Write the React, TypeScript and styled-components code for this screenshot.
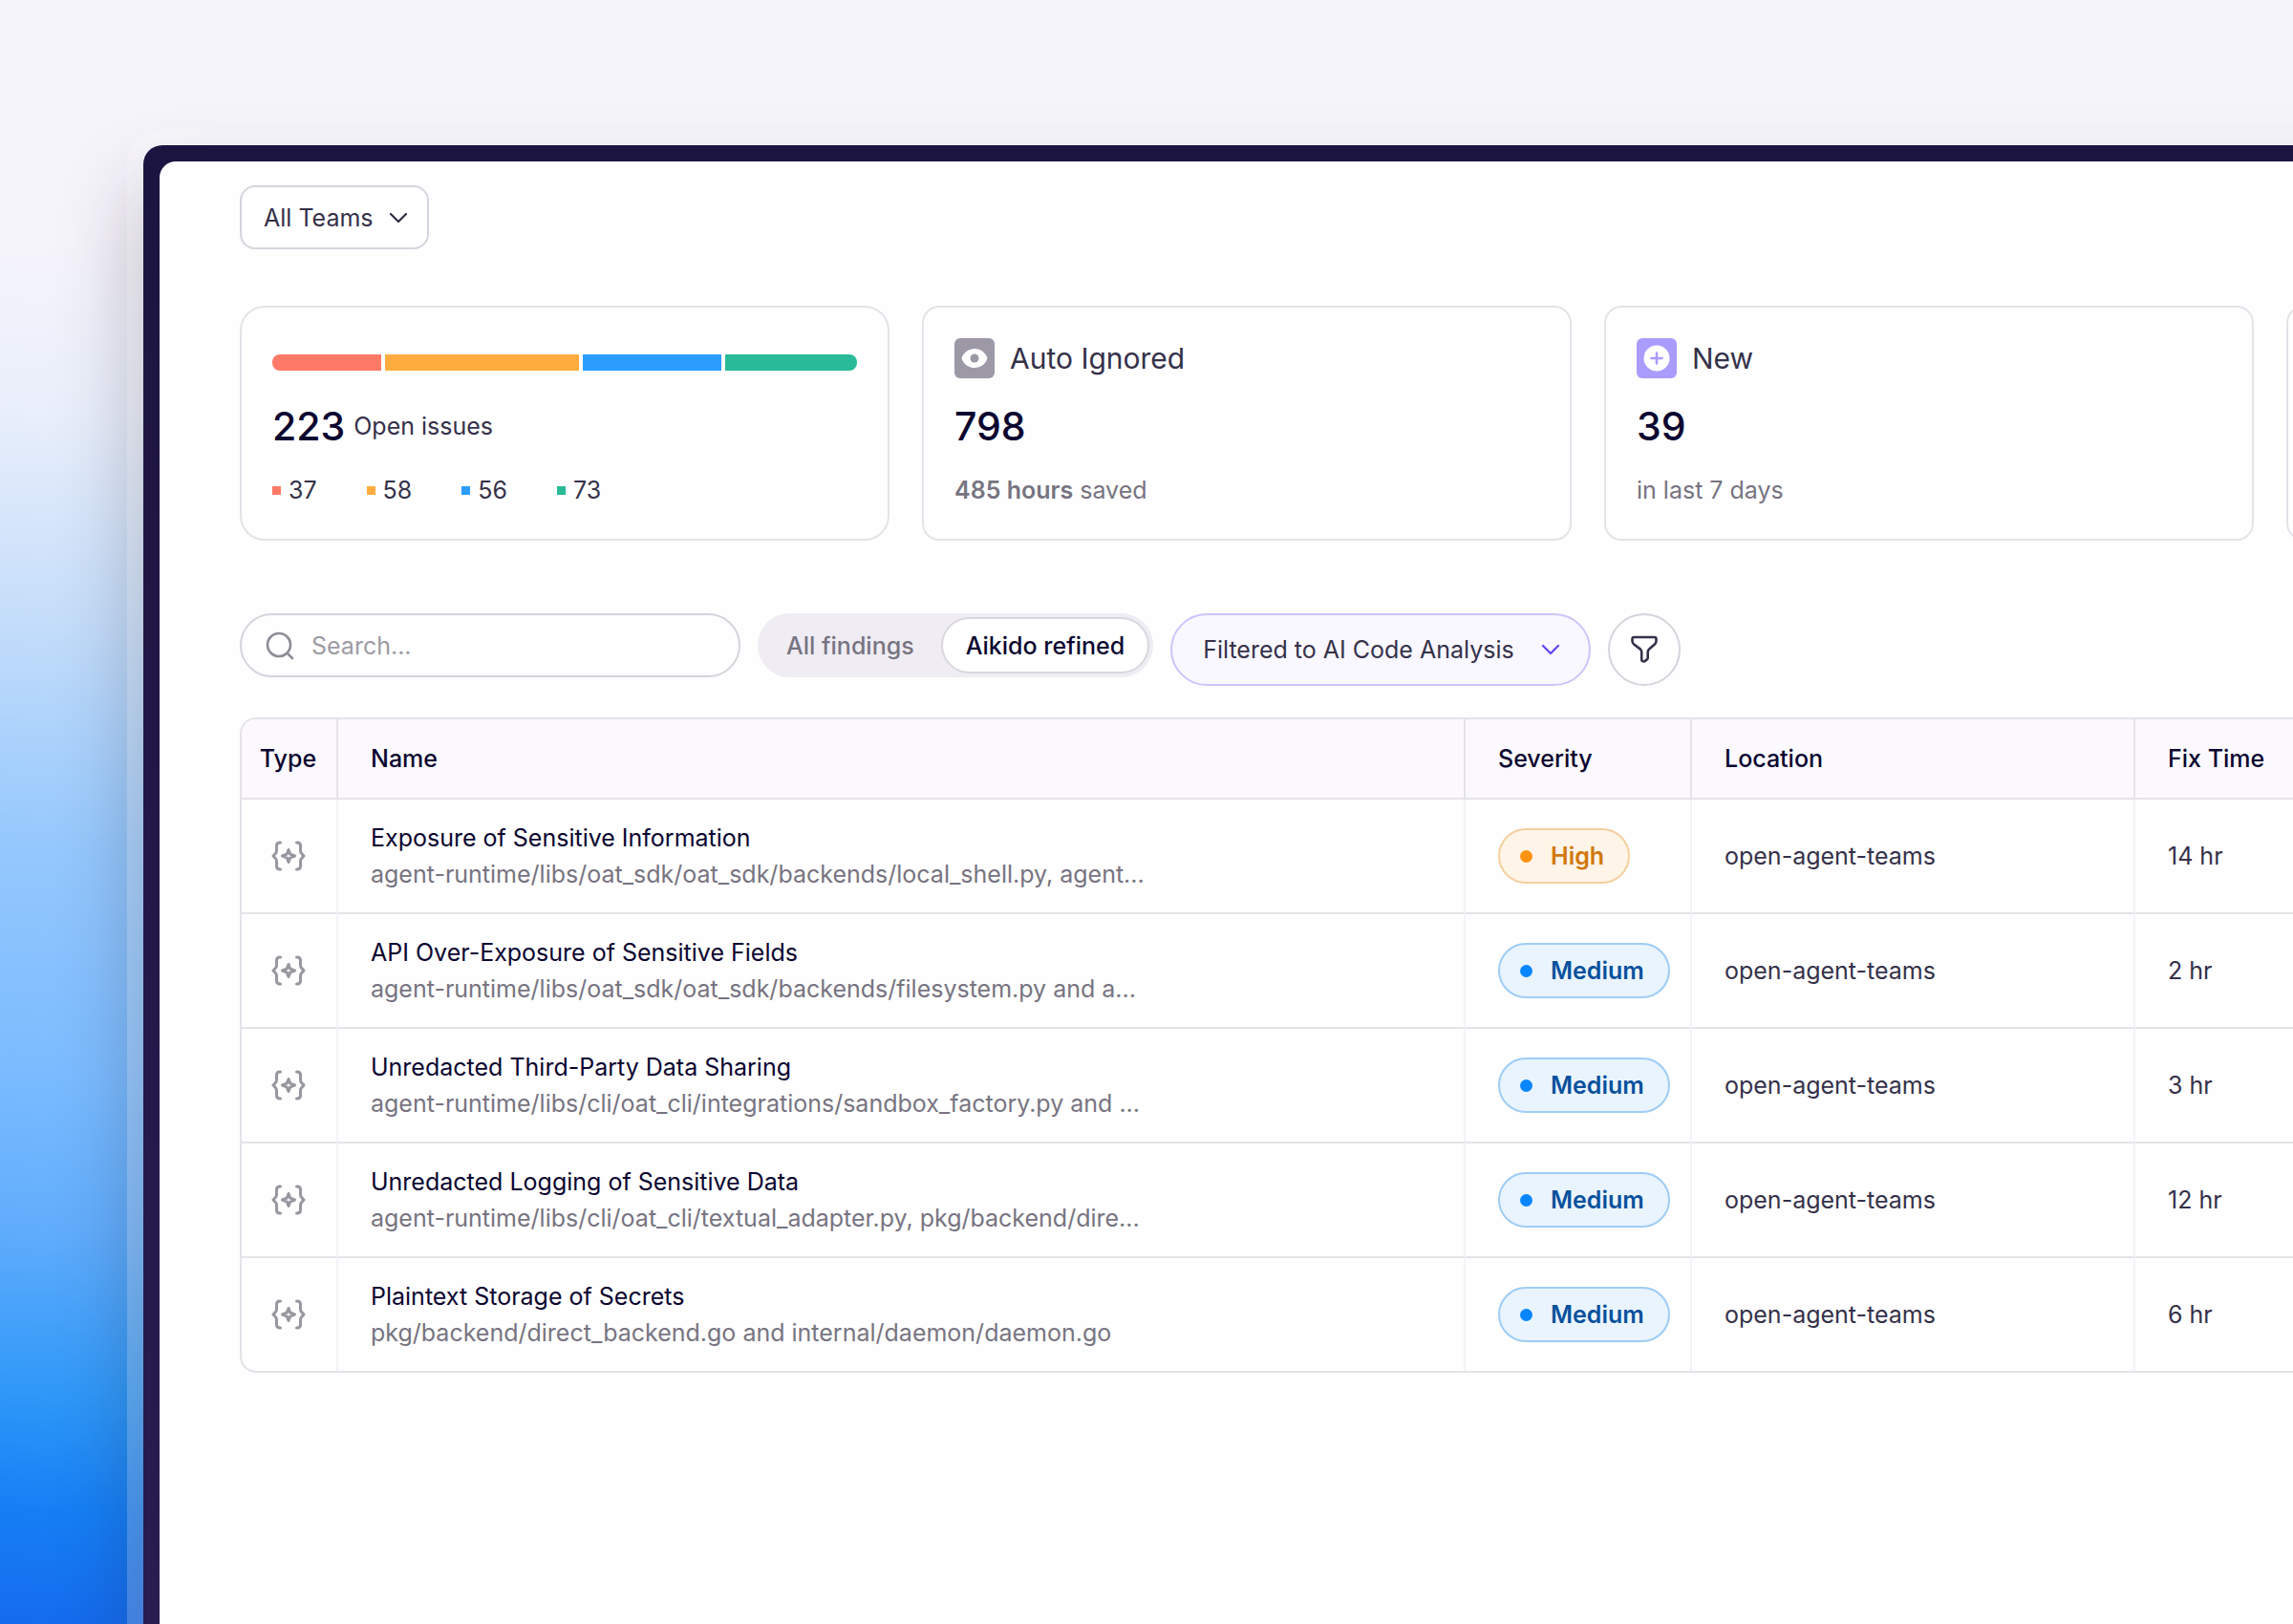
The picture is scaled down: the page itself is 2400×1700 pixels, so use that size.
import React from "react";
import styled, { createGlobalStyle } from "styled-components";

const GlobalStyle = createGlobalStyle`
  *, *::before, *::after { box-sizing: border-box; }
  body { margin: 0; }
  button, input, select { font: inherit; color: inherit; margin: 0; }
`;

const ink = "#0b0530";
const body = "#35314a";
const muted = "#777481";
const line = "#e5e3e9";

const Page = styled.div`
  display: flex;
  min-height: 100vh;
  padding: 152px 0 0 150px;
  overflow: hidden;
  font-family: Inter, "Liberation Sans", sans-serif;
  font-size: 25px;
  line-height: 38px;
  color: ${body};
  background: linear-gradient(
    184deg,
    #f6f4fb 0%,
    #f6f4fb 16%,
    #e9effb 27%,
    #c6defa 39%,
    #95c8fd 53%,
    #7abbff 67%,
    #61adfc 76%,
    #2f98f8 86%,
    #167ff5 93%,
    #156bee 100%
  );
  background-size: 600px 100%;
  background-repeat: no-repeat;
  background-color: #f6f4fb;
`;

const Frame = styled.div`
  flex: none;
  display: flex;
  width: 126vw;
  padding: 17px 17px 0;
  border-radius: 20px 20px 0 0;
  background: linear-gradient(#1c1440, #281c50);
  box-shadow:
    0 0 0 17px rgba(255, 255, 255, 0.2),
    0 50px 80px 10px rgba(20, 10, 30, 0.25);
`;

const Main = styled.main`
  flex: 1;
  min-width: 0;
  padding: 25px 84px 84px;
  border-radius: 17px 17px 0 0;
  background: #fefefe;
`;

const SelectBox = styled.label<{ $tinted?: boolean }>`
  position: relative;
  display: inline-flex;
  height: ${(p) => (p.$tinted ? 76 : 67)}px;
  border: 2px solid ${(p) => (p.$tinted ? "#cfc4fb" : "#d6d4dc")};
  border-radius: ${(p) => (p.$tinted ? 38 : 16)}px;
  background: ${(p) => (p.$tinted ? "#f9f7ff" : "#fff")};
  overflow: hidden;

  select {
    appearance: none;
    border: 0;
    outline: 0;
    background: transparent;
    padding: ${(p) => (p.$tinted ? "0 78px 0 32px" : "0 56px 0 23px")};
  }
  svg {
    position: absolute;
    right: ${(p) => (p.$tinted ? 30 : 20)}px;
    top: 50%;
    margin-top: -6px;
    pointer-events: none;
    color: ${(p) => (p.$tinted ? "#6149f5" : body)};
  }
`;

const Cards = styled.section`
  display: grid;
  grid-template-columns: repeat(4, minmax(0, 1fr));
  gap: 34px;
  margin-top: 59px;
`;

const Card = styled.article<{ $round?: boolean }>`
  display: flex;
  flex-direction: column;
  gap: 24px;
  min-height: 246px;
  padding: 32px 32px 34px;
  border: 2px solid ${line};
  border-radius: ${(p) => (p.$round ? 26 : 18)}px;
`;

const CardHead = styled.div`
  display: flex;
  align-items: center;
  gap: 16px;
  height: 42px;
`;

const CardTitle = styled.h2`
  margin: 0;
  font-size: 30px;
  font-weight: 400;
`;

const Tile = styled.span<{ $color: string }>`
  display: grid;
  place-items: center;
  width: 42px;
  height: 42px;
  border-radius: 6px;
  background: ${(p) => p.$color};
`;

const Bar = styled.div`
  display: flex;
  align-items: flex-end;
  gap: 4px;
  height: 42px;
  padding-bottom: 8px;
`;

const Segment = styled.span<{ $color: string; $share: number }>`
  flex: ${(p) => p.$share} 1 0;
  height: 17px;
  background: ${(p) => p.$color};
  &:first-child { border-radius: 8px 0 0 8px; }
  &:last-child { border-radius: 0 8px 8px 0; }
`;

const Figure = styled.div`
  display: flex;
  align-items: center;
  gap: 9px;
  height: 52px;
`;

const Big = styled.strong`
  font-size: 41px;
  font-weight: 500;
  color: ${ink};
`;

const Note = styled.p`
  margin: 0;
  line-height: 34px;
  color: ${muted};
  b { font-weight: 600; }
`;

const Legend = styled.ul`
  display: flex;
  gap: 52px;
  margin: 0;
  padding: 0;
  list-style: none;
  line-height: 34px;
`;

const LegendItem = styled.li<{ $color: string }>`
  display: flex;
  align-items: center;
  gap: 8px;
  &::before {
    content: "";
    width: 9px;
    height: 9px;
    background: ${(p) => p.$color};
  }
`;

const Toolbar = styled.div`
  display: flex;
  align-items: flex-start;
  gap: 18px;
  margin-top: 76px;
`;

const SearchBox = styled.label`
  display: flex;
  align-items: center;
  gap: 18px;
  width: 524px;
  height: 67px;
  padding: 0 25px;
  border: 2px solid #d6d4dc;
  border-radius: 34px;
  color: #8e8c96;

  input {
    flex: 1;
    min-width: 0;
    border: 0;
    outline: 0;
    padding: 0;
    background: transparent;
    &::placeholder { color: #9d9ba4; opacity: 1; }
  }
`;

const Toggle = styled.div`
  display: flex;
  gap: 2px;
  height: 67px;
  padding: 4px;
  border-radius: 34px;
  background: #efecf3;
`;

const ToggleButton = styled.button<{ $active?: boolean }>`
  padding: 0 24px;
  border: 2px solid ${(p) => (p.$active ? "#d9d6df" : "transparent")};
  border-radius: 30px;
  background: ${(p) => (p.$active ? "#fff" : "transparent")};
  color: ${(p) => (p.$active ? ink : muted)};
  font-weight: 500;
`;

const RoundButton = styled.button`
  display: grid;
  place-items: center;
  width: 76px;
  height: 76px;
  padding: 0;
  border: 2px solid #d6d4dc;
  border-radius: 50%;
  background: #fff;
`;

const TableFrame = styled.div`
  margin-top: 33px;
  border: 2px solid ${line};
  border-radius: 17px;
  overflow: hidden;
`;

const Table = styled.table`
  width: 100%;
  table-layout: fixed;
  border-collapse: separate;
  border-spacing: 0;

  th, td {
    padding: 0 34px;
    text-align: left;
    border-bottom: 2px solid ${line};
  }
  th {
    height: 84px;
    background: #fbf9fd;
    color: ${ink};
    font-weight: 500;
    border-right: 2px solid ${line};
  }
  td {
    height: 120px;
    border-right: 2px solid #f5f3f8;
  }
  th:first-child, td:first-child {
    padding: 0 2px 0 0;
    text-align: center;
  }
  th:last-child, td:last-child { border-right: 0; }
  tbody tr:last-child td {
    height: 118px;
    border-bottom: 0;
  }
  svg { display: block; margin: 0 auto; }
`;

const Col = styled.col<{ $width?: number }>`
  width: ${(p) => (p.$width ? `${p.$width}px` : "auto")};
`;

const Issue = styled.div`
  color: ${ink};
`;

const Path = styled.div`
  color: ${muted};
`;

const Badge = styled.span<{ $high?: boolean }>`
  display: inline-flex;
  align-items: center;
  gap: 19px;
  height: 58px;
  padding: 0 25px 0 21px;
  vertical-align: middle;
  border: 2px solid ${(p) => (p.$high ? "#f5cf9f" : "#9fcdf6")};
  border-radius: 29px;
  background: ${(p) => (p.$high ? "#fff4e8" : "#eaf4ff")};
  color: ${(p) => (p.$high ? "#d0780a" : "#07519c")};
  font-weight: 600;
  &::before {
    content: "";
    width: 13px;
    height: 13px;
    border-radius: 50%;
    background: ${(p) => (p.$high ? "#ff9212" : "#0886ff")};
  }
`;

const Chevron = () => (
  <svg width="20" height="12" viewBox="0 0 20 12" fill="none" stroke="currentColor" strokeWidth="2.3" strokeLinecap="round" strokeLinejoin="round" aria-hidden="true">
    <path d="M2 2l8 8 8-8" />
  </svg>
);

const SearchIcon = () => (
  <svg width="30" height="30" viewBox="0 0 30 30" fill="none" stroke="currentColor" strokeWidth="2.6" strokeLinecap="round" aria-hidden="true">
    <circle cx="14" cy="14" r="12" />
    <path d="M22.8 22.8l5.2 5.2" />
  </svg>
);

const FunnelIcon = () => (
  <svg width="28" height="30" viewBox="0 0 28 30" fill="none" stroke={body} strokeWidth="2.6" strokeLinejoin="round" aria-hidden="true">
    <path d="M3.4 2h21.2c1 0 1.9.8 1.9 1.9v2.2c0 1.2-.5 2.3-1.4 3.1l-6 5.2c-.9.8-1.4 1.9-1.4 3.1v6.2c0 .8-.4 1.5-1.1 1.9l-2.2 1.5c-1.4.9-3.2-.1-3.2-1.7v-7.9c0-1.1-.4-2.1-1.2-2.9L2.9 9.2C2 8.3 1.5 7.2 1.5 6V3.900C1.500 2.800 2.300 2 3.400 2z" />
  </svg>
);

const EyeIcon = () => (
  <svg width="28" height="20" viewBox="0 0 28 20" aria-hidden="true">
    <path d="M14 0C7.5 0 2.9 4 .9 8.8a3 3 0 0 0 0 2.4C2.9 16 7.5 20 14 20s11.1-4 13.1-8.8a3 3 0 0 0 0-2.4C25.1 4 20.5 0 14 0z" fill="#fff" />
    <circle cx="14" cy="10" r="4.5" fill="#9c98a6" />
  </svg>
);

const PlusIcon = () => (
  <svg width="28" height="28" viewBox="0 0 28 28" aria-hidden="true">
    <circle cx="14" cy="14" r="13.5" fill="#fff" />
    <path d="M14 8.5v11M8.5 14h11" stroke="#a99cfd" strokeWidth="2.6" strokeLinecap="round" />
  </svg>
);

const CodeIcon = () => (
  <svg width="36" height="32" viewBox="0 0 36 32" fill="none" stroke="#98969f" strokeWidth="3" strokeLinecap="round" strokeLinejoin="round" role="img" aria-label="AI code analysis">
    <path d="M9.5 2H9C6.800 2 5.500 3.300 5.500 5.500v5c0 1.300-.4 2.200-1.200 3L2 16l2.300 2.500c.8.8 1.200 1.700 1.200 3v5C5.500 28.700 6.800 30 9 30h.5" />
    <path d="M26.500 2h.5c2.200 0 3.500 1.300 3.500 3.500v5c0 1.300.4 2.200 1.200 3L34 16l-2.300 2.500c-.8.8-1.200 1.700-1.200 3v5c0 2.200-1.300 3.500-3.500 3.500h-.5" />
    <path d="M18 9.500l1.800 4.700 4.700 1.800-4.700 1.800L18 22.500l-1.800-4.700-4.700-1.800 4.700-1.800z" />
  </svg>
);

const severities = [
  { color: "#ff7966", count: 37, share: 114 },
  { color: "#ffac3f", count: 58, share: 203 },
  { color: "#2b9dff", count: 56, share: 145 },
  { color: "#29ba97", count: 73, share: 138 },
];

const issues = [
  { name: "Exposure of Sensitive Information", path: "agent-runtime/libs/oat_sdk/oat_sdk/backends/local_shell.py, agent...", severity: "High", time: "14 hr" },
  { name: "API Over-Exposure of Sensitive Fields", path: "agent-runtime/libs/oat_sdk/oat_sdk/backends/filesystem.py and a...", severity: "Medium", time: "2 hr" },
  { name: "Unredacted Third-Party Data Sharing", path: "agent-runtime/libs/cli/oat_cli/integrations/sandbox_factory.py and ...", severity: "Medium", time: "3 hr" },
  { name: "Unredacted Logging of Sensitive Data", path: "agent-runtime/libs/cli/oat_cli/textual_adapter.py, pkg/backend/dire...", severity: "Medium", time: "12 hr" },
  { name: "Plaintext Storage of Secrets", path: "pkg/backend/direct_backend.go and internal/daemon/daemon.go", severity: "Medium", time: "6 hr" },
];

export default function App() {
  return (
    <>
      <GlobalStyle />
      <Page>
        <Frame>
          <Main>
            <SelectBox>
              <select aria-label="Team">
                <option>All Teams</option>
              </select>
              <Chevron />
            </SelectBox>

            <Cards>
              <Card $round>
                <Bar>
                  {severities.map((s) => (
                    <Segment key={s.color} $color={s.color} $share={s.share} />
                  ))}
                </Bar>
                <Figure>
                  <Big>223</Big>
                  <span>Open issues</span>
                </Figure>
                <Legend>
                  {severities.map((s) => (
                    <LegendItem key={s.color} $color={s.color}>{s.count}</LegendItem>
                  ))}
                </Legend>
              </Card>
              <Card>
                <CardHead>
                  <Tile $color="#9c98a6"><EyeIcon /></Tile>
                  <CardTitle>Auto Ignored</CardTitle>
                </CardHead>
                <Figure><Big>798</Big></Figure>
                <Note><b>485 hours</b> saved</Note>
              </Card>
              <Card>
                <CardHead>
                  <Tile $color="#a99cfd"><PlusIcon /></Tile>
                  <CardTitle>New</CardTitle>
                </CardHead>
                <Figure><Big>39</Big></Figure>
                <Note>in last 7 days</Note>
              </Card>
              <Card />
            </Cards>

            <Toolbar>
              <SearchBox>
                <SearchIcon />
                <input type="search" placeholder="Search..." aria-label="Search" />
              </SearchBox>
              <Toggle role="group" aria-label="Findings">
                <ToggleButton type="button" aria-pressed="false">All findings</ToggleButton>
                <ToggleButton type="button" aria-pressed="true" $active>Aikido refined</ToggleButton>
              </Toggle>
              <SelectBox $tinted>
                <select aria-label="Issue type">
                  <option>Filtered to AI Code Analysis</option>
                </select>
                <Chevron />
              </SelectBox>
              <RoundButton type="button" aria-label="Filters"><FunnelIcon /></RoundButton>
            </Toolbar>

            <TableFrame>
              <Table>
                <colgroup>
                  <Col $width={101} />
                  <Col />
                  <Col $width={237} />
                  <Col $width={464} />
                  <Col $width={836} />
                </colgroup>
                <thead>
                  <tr>
                    <th scope="col">Type</th>
                    <th scope="col">Name</th>
                    <th scope="col">Severity</th>
                    <th scope="col">Location</th>
                    <th scope="col">Fix Time</th>
                  </tr>
                </thead>
                <tbody>
                  {issues.map((issue) => (
                    <tr key={issue.name}>
                      <td><CodeIcon /></td>
                      <td>
                        <Issue>{issue.name}</Issue>
                        <Path>{issue.path}</Path>
                      </td>
                      <td><Badge $high={issue.severity === "High"}>{issue.severity}</Badge></td>
                      <td>open-agent-teams</td>
                      <td>{issue.time}</td>
                    </tr>
                  ))}
                </tbody>
              </Table>
            </TableFrame>
          </Main>
        </Frame>
      </Page>
    </>
  );
}
